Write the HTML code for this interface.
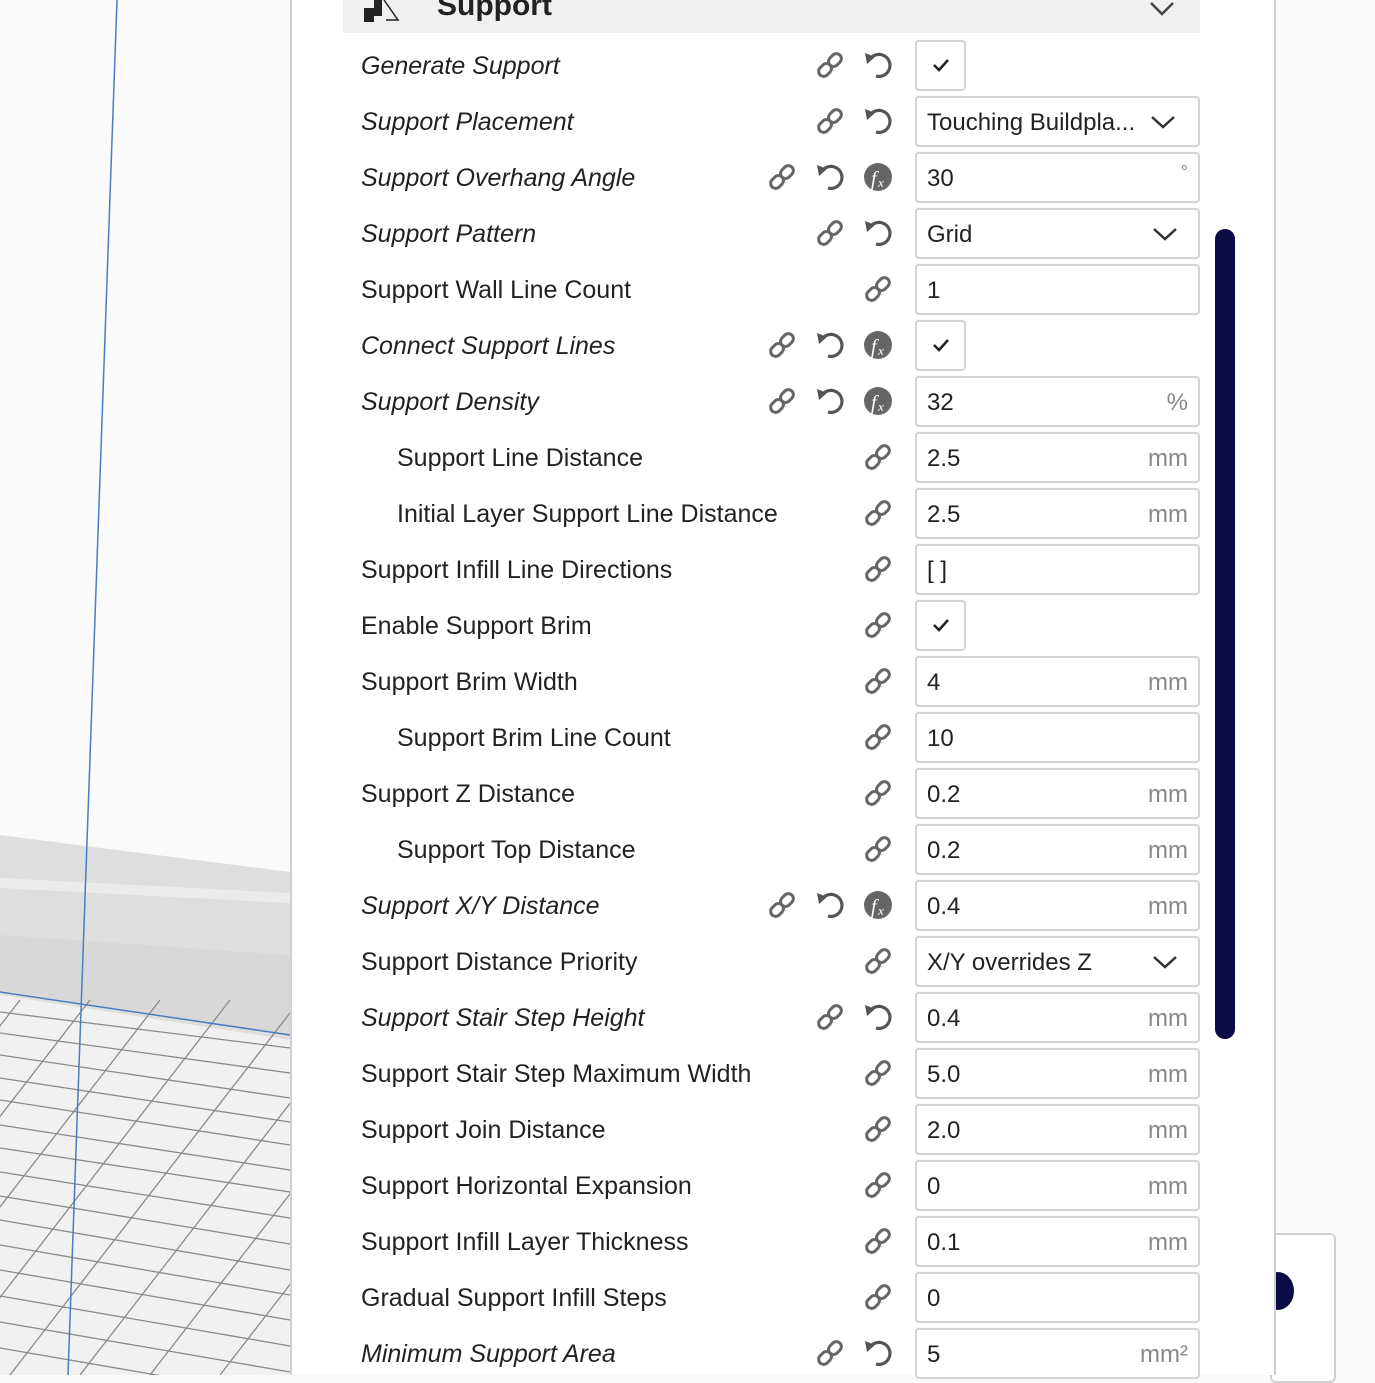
<!DOCTYPE html>
<html><head><meta charset="utf-8"><style>
*{margin:0;padding:0;box-sizing:border-box}
body{width:1375px;height:1375px;overflow:hidden;background:#fafafa;position:relative;font-family:"Liberation Sans","DejaVu Sans",sans-serif;color:#222}
#panel{position:absolute;left:290px;top:0;width:986px;height:1375px;background:#fff;border-left:2px solid #d0d0d0;border-right:2px solid #d0d0d0}
#hdr{position:absolute;left:343px;top:0;width:857px;height:33px;background:#f0f0f0}
.r{position:absolute;left:0;width:1375px;height:56px}
.l{position:absolute;left:361px;top:1px;line-height:56px;font-size:25px;white-space:nowrap}
.l.ind{left:397px}
.l.i{font-style:italic}
.ic{position:absolute;top:12px;width:32px;height:32px}
.in{position:absolute;left:915px;top:3px;width:285px;height:51px;border:2px solid #d4d4d4;border-radius:4px;background:#fff;font-size:24px;line-height:49px;padding-left:10px}
.cb{width:51px;padding:0}
.u{position:absolute;right:10px;top:0;color:#888}
.dd{position:absolute;right:20px;top:16px}
</style></head><body>
<svg style="position:absolute;left:0;top:0" width="290" height="1375">
<polygon points="0,835 290,872 290,1040 0,995" fill="#dedede"/>
<polygon points="0,878 290,893 290,903 0,888" fill="#ebebeb"/>
<polygon points="0,935 290,955 290,1035 0,990" fill="#d8d8d8"/>
<polygon points="0,995 290,1040 290,1375 0,1375" fill="#f1f1f1"/>
<g stroke="#8a8a8a" stroke-width="1.3">
<line x1="0" y1="1012" x2="290" y2="1048"/><line x1="0" y1="1033" x2="290" y2="1073"/><line x1="0" y1="1055" x2="290" y2="1098"/><line x1="0" y1="1078" x2="290" y2="1122"/><line x1="0" y1="1100" x2="290" y2="1145"/><line x1="0" y1="1125" x2="290" y2="1170"/><line x1="0" y1="1148" x2="290" y2="1192"/><line x1="0" y1="1172" x2="290" y2="1218"/><line x1="0" y1="1196" x2="290" y2="1244"/><line x1="0" y1="1220" x2="290" y2="1270"/><line x1="0" y1="1245" x2="290" y2="1295"/><line x1="0" y1="1270" x2="290" y2="1320"/><line x1="0" y1="1296" x2="290" y2="1346"/><line x1="0" y1="1322" x2="290" y2="1372"/><line x1="0" y1="1348" x2="290" y2="1398"/>
<line x1="-60" y1="1375" x2="230" y2="1000"/><line x1="10" y1="1375" x2="300" y2="1000"/><line x1="80" y1="1375" x2="370" y2="1000"/><line x1="150" y1="1375" x2="440" y2="1000"/><line x1="220" y1="1375" x2="510" y2="1000"/><line x1="-130" y1="1375" x2="160" y2="1000"/><line x1="-200" y1="1375" x2="90" y2="1000"/><line x1="-270" y1="1375" x2="20" y2="1000"/>
</g>
<line x1="0" y1="992" x2="290" y2="1035" stroke="#4a7cc0" stroke-width="1.5"/>
<line x1="117" y1="0" x2="68" y2="1375" stroke="#4a7cc0" stroke-width="1.5"/>
</svg>
<div style="position:absolute;left:1270px;top:1233px;width:66px;height:150px;border:2px solid #d0d0d0;border-radius:6px;background:#fff"></div>
<div style="position:absolute;left:1262px;top:1272px;width:32px;height:38px;border-radius:50%;background:#0d0b45"></div>
<div id="panel"></div>
<div id="hdr"></div>
<svg style="position:absolute;left:362px;top:0" width="40" height="24"><polygon points="2,8 12,8 12,0 20,0 20,16 12,16 12,22 2,22" fill="#222"/><path d="M22 0 L36 20 L24 20" fill="none" stroke="#222" stroke-width="1.5"/></svg>
<div style="position:absolute;left:437px;top:-14px;font-size:30px;font-weight:bold;line-height:40px">Support</div>
<svg style="position:absolute;left:1148px;top:0" width="28" height="18"><path d="M3 3 L14 14 L25 3" fill="none" stroke="#444" stroke-width="2.5"/></svg>
<div style="position:absolute;left:1215px;top:229px;width:20px;height:810px;border-radius:10px;background:#0d0b45"></div>

<div class="r" style="top:37px"><span class="l i">Generate Support</span><svg class="ic" style="left:814px" viewBox="0 0 32 32"><g transform="rotate(-45 16 16)" fill="none" stroke="#666" stroke-width="3"><rect x="2" y="11" width="14" height="10" rx="5"/><rect x="16" y="11" width="14" height="10" rx="5"/></g></svg><svg class="ic" style="left:862px" viewBox="0 0 32 32"><path d="M8 10 A11 11 0 1 1 14 27" fill="none" stroke="#555" stroke-width="3.2"/><polygon points="3,4 13,8 5,15" fill="#555"/></svg><div class="in cb"><svg style="position:absolute;left:15px;top:15px" width="18" height="16"><path d="M2 8 L7 13 L16 3" fill="none" stroke="#222" stroke-width="2.6"/></svg></div></div>
<div class="r" style="top:93px"><span class="l i">Support Placement</span><svg class="ic" style="left:814px" viewBox="0 0 32 32"><g transform="rotate(-45 16 16)" fill="none" stroke="#666" stroke-width="3"><rect x="2" y="11" width="14" height="10" rx="5"/><rect x="16" y="11" width="14" height="10" rx="5"/></g></svg><svg class="ic" style="left:862px" viewBox="0 0 32 32"><path d="M8 10 A11 11 0 1 1 14 27" fill="none" stroke="#555" stroke-width="3.2"/><polygon points="3,4 13,8 5,15" fill="#555"/></svg><div class="in">Touching Buildpla...<svg class="dd" style="right:22px" width="26" height="16"><path d="M2 3 L13 13 L24 3" fill="none" stroke="#333" stroke-width="2.5"/></svg></div></div>
<div class="r" style="top:149px"><span class="l i">Support Overhang Angle</span><svg class="ic" style="left:766px" viewBox="0 0 32 32"><g transform="rotate(-45 16 16)" fill="none" stroke="#666" stroke-width="3"><rect x="2" y="11" width="14" height="10" rx="5"/><rect x="16" y="11" width="14" height="10" rx="5"/></g></svg><svg class="ic" style="left:814px" viewBox="0 0 32 32"><path d="M8 10 A11 11 0 1 1 14 27" fill="none" stroke="#555" stroke-width="3.2"/><polygon points="3,4 13,8 5,15" fill="#555"/></svg><svg class="ic" style="left:862px" viewBox="0 0 32 32"><circle cx="16" cy="16" r="14" fill="#666"/><text x="9" y="24" font-size="20" font-style="italic" fill="#fff" font-family="Liberation Serif,serif">f</text><text x="16" y="26" font-size="13" font-style="italic" fill="#fff" font-family="Liberation Serif,serif">x</text></svg><div class="in">30<span class="u" style="font-size:18px;top:-6px">°</span></div></div>
<div class="r" style="top:205px"><span class="l i">Support Pattern</span><svg class="ic" style="left:814px" viewBox="0 0 32 32"><g transform="rotate(-45 16 16)" fill="none" stroke="#666" stroke-width="3"><rect x="2" y="11" width="14" height="10" rx="5"/><rect x="16" y="11" width="14" height="10" rx="5"/></g></svg><svg class="ic" style="left:862px" viewBox="0 0 32 32"><path d="M8 10 A11 11 0 1 1 14 27" fill="none" stroke="#555" stroke-width="3.2"/><polygon points="3,4 13,8 5,15" fill="#555"/></svg><div class="in">Grid<svg class="dd" width="26" height="16"><path d="M2 3 L13 13 L24 3" fill="none" stroke="#333" stroke-width="2.5"/></svg></div></div>
<div class="r" style="top:261px"><span class="l">Support Wall Line Count</span><svg class="ic" style="left:862px" viewBox="0 0 32 32"><g transform="rotate(-45 16 16)" fill="none" stroke="#666" stroke-width="3"><rect x="2" y="11" width="14" height="10" rx="5"/><rect x="16" y="11" width="14" height="10" rx="5"/></g></svg><div class="in">1</div></div>
<div class="r" style="top:317px"><span class="l i">Connect Support Lines</span><svg class="ic" style="left:766px" viewBox="0 0 32 32"><g transform="rotate(-45 16 16)" fill="none" stroke="#666" stroke-width="3"><rect x="2" y="11" width="14" height="10" rx="5"/><rect x="16" y="11" width="14" height="10" rx="5"/></g></svg><svg class="ic" style="left:814px" viewBox="0 0 32 32"><path d="M8 10 A11 11 0 1 1 14 27" fill="none" stroke="#555" stroke-width="3.2"/><polygon points="3,4 13,8 5,15" fill="#555"/></svg><svg class="ic" style="left:862px" viewBox="0 0 32 32"><circle cx="16" cy="16" r="14" fill="#666"/><text x="9" y="24" font-size="20" font-style="italic" fill="#fff" font-family="Liberation Serif,serif">f</text><text x="16" y="26" font-size="13" font-style="italic" fill="#fff" font-family="Liberation Serif,serif">x</text></svg><div class="in cb"><svg style="position:absolute;left:15px;top:15px" width="18" height="16"><path d="M2 8 L7 13 L16 3" fill="none" stroke="#222" stroke-width="2.6"/></svg></div></div>
<div class="r" style="top:373px"><span class="l i">Support Density</span><svg class="ic" style="left:766px" viewBox="0 0 32 32"><g transform="rotate(-45 16 16)" fill="none" stroke="#666" stroke-width="3"><rect x="2" y="11" width="14" height="10" rx="5"/><rect x="16" y="11" width="14" height="10" rx="5"/></g></svg><svg class="ic" style="left:814px" viewBox="0 0 32 32"><path d="M8 10 A11 11 0 1 1 14 27" fill="none" stroke="#555" stroke-width="3.2"/><polygon points="3,4 13,8 5,15" fill="#555"/></svg><svg class="ic" style="left:862px" viewBox="0 0 32 32"><circle cx="16" cy="16" r="14" fill="#666"/><text x="9" y="24" font-size="20" font-style="italic" fill="#fff" font-family="Liberation Serif,serif">f</text><text x="16" y="26" font-size="13" font-style="italic" fill="#fff" font-family="Liberation Serif,serif">x</text></svg><div class="in">32<span class="u">%</span></div></div>
<div class="r" style="top:429px"><span class="l ind">Support Line Distance</span><svg class="ic" style="left:862px" viewBox="0 0 32 32"><g transform="rotate(-45 16 16)" fill="none" stroke="#666" stroke-width="3"><rect x="2" y="11" width="14" height="10" rx="5"/><rect x="16" y="11" width="14" height="10" rx="5"/></g></svg><div class="in">2.5<span class="u">mm</span></div></div>
<div class="r" style="top:485px"><span class="l ind">Initial Layer Support Line Distance</span><svg class="ic" style="left:862px" viewBox="0 0 32 32"><g transform="rotate(-45 16 16)" fill="none" stroke="#666" stroke-width="3"><rect x="2" y="11" width="14" height="10" rx="5"/><rect x="16" y="11" width="14" height="10" rx="5"/></g></svg><div class="in">2.5<span class="u">mm</span></div></div>
<div class="r" style="top:541px"><span class="l">Support Infill Line Directions</span><svg class="ic" style="left:862px" viewBox="0 0 32 32"><g transform="rotate(-45 16 16)" fill="none" stroke="#666" stroke-width="3"><rect x="2" y="11" width="14" height="10" rx="5"/><rect x="16" y="11" width="14" height="10" rx="5"/></g></svg><div class="in">[ ]</div></div>
<div class="r" style="top:597px"><span class="l">Enable Support Brim</span><svg class="ic" style="left:862px" viewBox="0 0 32 32"><g transform="rotate(-45 16 16)" fill="none" stroke="#666" stroke-width="3"><rect x="2" y="11" width="14" height="10" rx="5"/><rect x="16" y="11" width="14" height="10" rx="5"/></g></svg><div class="in cb"><svg style="position:absolute;left:15px;top:15px" width="18" height="16"><path d="M2 8 L7 13 L16 3" fill="none" stroke="#222" stroke-width="2.6"/></svg></div></div>
<div class="r" style="top:653px"><span class="l">Support Brim Width</span><svg class="ic" style="left:862px" viewBox="0 0 32 32"><g transform="rotate(-45 16 16)" fill="none" stroke="#666" stroke-width="3"><rect x="2" y="11" width="14" height="10" rx="5"/><rect x="16" y="11" width="14" height="10" rx="5"/></g></svg><div class="in">4<span class="u">mm</span></div></div>
<div class="r" style="top:709px"><span class="l ind">Support Brim Line Count</span><svg class="ic" style="left:862px" viewBox="0 0 32 32"><g transform="rotate(-45 16 16)" fill="none" stroke="#666" stroke-width="3"><rect x="2" y="11" width="14" height="10" rx="5"/><rect x="16" y="11" width="14" height="10" rx="5"/></g></svg><div class="in">10</div></div>
<div class="r" style="top:765px"><span class="l">Support Z Distance</span><svg class="ic" style="left:862px" viewBox="0 0 32 32"><g transform="rotate(-45 16 16)" fill="none" stroke="#666" stroke-width="3"><rect x="2" y="11" width="14" height="10" rx="5"/><rect x="16" y="11" width="14" height="10" rx="5"/></g></svg><div class="in">0.2<span class="u">mm</span></div></div>
<div class="r" style="top:821px"><span class="l ind">Support Top Distance</span><svg class="ic" style="left:862px" viewBox="0 0 32 32"><g transform="rotate(-45 16 16)" fill="none" stroke="#666" stroke-width="3"><rect x="2" y="11" width="14" height="10" rx="5"/><rect x="16" y="11" width="14" height="10" rx="5"/></g></svg><div class="in">0.2<span class="u">mm</span></div></div>
<div class="r" style="top:877px"><span class="l i">Support X/Y Distance</span><svg class="ic" style="left:766px" viewBox="0 0 32 32"><g transform="rotate(-45 16 16)" fill="none" stroke="#666" stroke-width="3"><rect x="2" y="11" width="14" height="10" rx="5"/><rect x="16" y="11" width="14" height="10" rx="5"/></g></svg><svg class="ic" style="left:814px" viewBox="0 0 32 32"><path d="M8 10 A11 11 0 1 1 14 27" fill="none" stroke="#555" stroke-width="3.2"/><polygon points="3,4 13,8 5,15" fill="#555"/></svg><svg class="ic" style="left:862px" viewBox="0 0 32 32"><circle cx="16" cy="16" r="14" fill="#666"/><text x="9" y="24" font-size="20" font-style="italic" fill="#fff" font-family="Liberation Serif,serif">f</text><text x="16" y="26" font-size="13" font-style="italic" fill="#fff" font-family="Liberation Serif,serif">x</text></svg><div class="in">0.4<span class="u">mm</span></div></div>
<div class="r" style="top:933px"><span class="l">Support Distance Priority</span><svg class="ic" style="left:862px" viewBox="0 0 32 32"><g transform="rotate(-45 16 16)" fill="none" stroke="#666" stroke-width="3"><rect x="2" y="11" width="14" height="10" rx="5"/><rect x="16" y="11" width="14" height="10" rx="5"/></g></svg><div class="in">X/Y overrides Z<svg class="dd" width="26" height="16"><path d="M2 3 L13 13 L24 3" fill="none" stroke="#333" stroke-width="2.5"/></svg></div></div>
<div class="r" style="top:989px"><span class="l i">Support Stair Step Height</span><svg class="ic" style="left:814px" viewBox="0 0 32 32"><g transform="rotate(-45 16 16)" fill="none" stroke="#666" stroke-width="3"><rect x="2" y="11" width="14" height="10" rx="5"/><rect x="16" y="11" width="14" height="10" rx="5"/></g></svg><svg class="ic" style="left:862px" viewBox="0 0 32 32"><path d="M8 10 A11 11 0 1 1 14 27" fill="none" stroke="#555" stroke-width="3.2"/><polygon points="3,4 13,8 5,15" fill="#555"/></svg><div class="in">0.4<span class="u">mm</span></div></div>
<div class="r" style="top:1045px"><span class="l">Support Stair Step Maximum Width</span><svg class="ic" style="left:862px" viewBox="0 0 32 32"><g transform="rotate(-45 16 16)" fill="none" stroke="#666" stroke-width="3"><rect x="2" y="11" width="14" height="10" rx="5"/><rect x="16" y="11" width="14" height="10" rx="5"/></g></svg><div class="in">5.0<span class="u">mm</span></div></div>
<div class="r" style="top:1101px"><span class="l">Support Join Distance</span><svg class="ic" style="left:862px" viewBox="0 0 32 32"><g transform="rotate(-45 16 16)" fill="none" stroke="#666" stroke-width="3"><rect x="2" y="11" width="14" height="10" rx="5"/><rect x="16" y="11" width="14" height="10" rx="5"/></g></svg><div class="in">2.0<span class="u">mm</span></div></div>
<div class="r" style="top:1157px"><span class="l">Support Horizontal Expansion</span><svg class="ic" style="left:862px" viewBox="0 0 32 32"><g transform="rotate(-45 16 16)" fill="none" stroke="#666" stroke-width="3"><rect x="2" y="11" width="14" height="10" rx="5"/><rect x="16" y="11" width="14" height="10" rx="5"/></g></svg><div class="in">0<span class="u">mm</span></div></div>
<div class="r" style="top:1213px"><span class="l">Support Infill Layer Thickness</span><svg class="ic" style="left:862px" viewBox="0 0 32 32"><g transform="rotate(-45 16 16)" fill="none" stroke="#666" stroke-width="3"><rect x="2" y="11" width="14" height="10" rx="5"/><rect x="16" y="11" width="14" height="10" rx="5"/></g></svg><div class="in">0.1<span class="u">mm</span></div></div>
<div class="r" style="top:1269px"><span class="l">Gradual Support Infill Steps</span><svg class="ic" style="left:862px" viewBox="0 0 32 32"><g transform="rotate(-45 16 16)" fill="none" stroke="#666" stroke-width="3"><rect x="2" y="11" width="14" height="10" rx="5"/><rect x="16" y="11" width="14" height="10" rx="5"/></g></svg><div class="in">0</div></div>
<div class="r" style="top:1325px"><span class="l i">Minimum Support Area</span><svg class="ic" style="left:814px" viewBox="0 0 32 32"><g transform="rotate(-45 16 16)" fill="none" stroke="#666" stroke-width="3"><rect x="2" y="11" width="14" height="10" rx="5"/><rect x="16" y="11" width="14" height="10" rx="5"/></g></svg><svg class="ic" style="left:862px" viewBox="0 0 32 32"><path d="M8 10 A11 11 0 1 1 14 27" fill="none" stroke="#555" stroke-width="3.2"/><polygon points="3,4 13,8 5,15" fill="#555"/></svg><div class="in">5<span class="u">mm²</span></div></div>
</body></html>
